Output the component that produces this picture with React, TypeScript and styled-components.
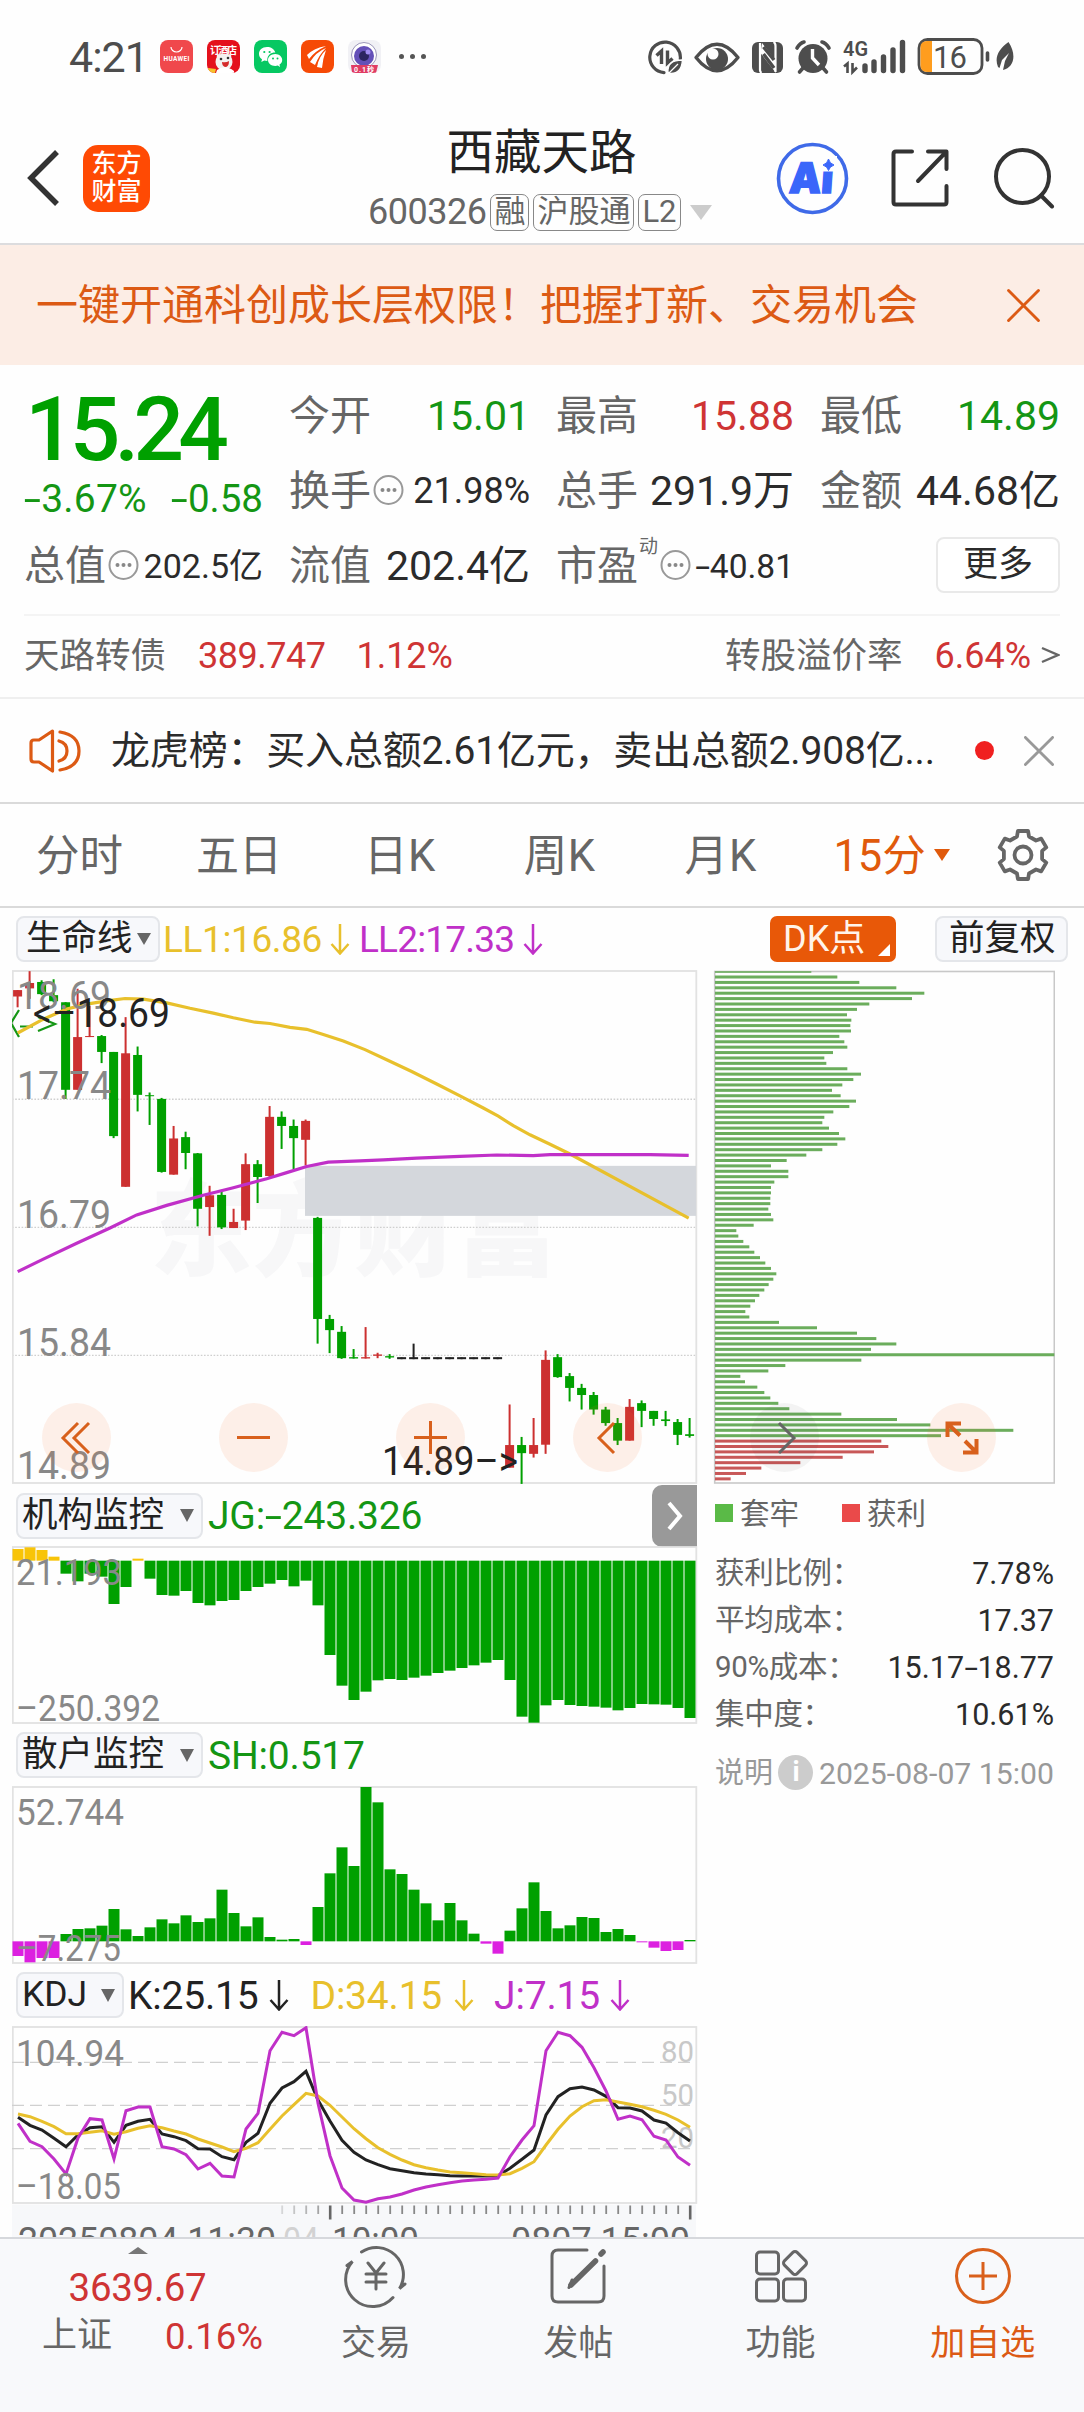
import React from "react";
import styled, { createGlobalStyle } from "styled-components";

const C = {
  ink: "#2b2b2b",
  gray: "#666",
  soft: "#888",
  orange: "#dc5a14",
  green: "#149614",
  bar: "#00a000",
  red: "#cf3434",
  yellow: "#e8c02c",
  purple: "#c030c8",
  blue: "#3f6ae8",
};

const FONT = 'Roboto, "Noto Sans CJK SC", sans-serif';

const Global = createGlobalStyle`
  html, body { margin: 0; padding: 0; background: #fefefe; }
  body { font-family: ${FONT}; width: 1084px; overflow-x: hidden; }
  * { box-sizing: border-box; }
  svg { display: block; flex: none; }
`;

const Screen = styled.div`
  width: 1084px;
  height: 2412px;
  display: flex;
  flex-direction: column;
  overflow: hidden;
  background: #fefefe;
`;

const T = styled.span<{ $s: number; $c?: string; $w?: number; $ls?: number; $ml?: number; $dy?: number }>`
  font-size: ${(p) => p.$s}px;
  color: ${(p) => p.$c || C.ink};
  font-weight: ${(p) => p.$w || 400};
  letter-spacing: ${(p) => p.$ls || 0}px;
  margin-left: ${(p) => p.$ml || 0}px;
  padding-top: ${(p) => p.$dy ?? 4}px;
  line-height: 1.1;
  white-space: nowrap;
  flex: none;
`;

const Dash = styled.span`
  display: inline-block;
  transform: scaleX(1.6);
  margin: 0 0.08em;
  &::before { content: "-"; }
`;

/* ---------- status bar ---------- */
const StatusBar = styled.header`
  height: 113px;
  padding: 0 70px 0 69px;
  display: flex;
  align-items: center;
`;
const AppIcons = styled.div`
  display: flex;
  gap: 14px;
  margin-left: 12px;
`;
const AppIcon = styled.div<{ $bg: string }>`
  width: 33px;
  height: 33px;
  border-radius: 8px;
  background: ${(p) => p.$bg};
  color: #fff;
  display: flex;
  align-items: center;
  justify-content: center;
  overflow: hidden;
  font-size: 8px;
  line-height: 1;
`;
const MoreDots = styled.div`
  display: flex;
  gap: 6px;
  margin-left: 18px;
  i { width: 5px; height: 5px; border-radius: 50%; background: #555; }
`;
const StatusRight = styled.div`
  margin-left: auto;
  display: flex;
  align-items: center;
`;

function StatusIcons() {
  const k = "#4d4d4d";
  return (
    <svg width="366" height="40" viewBox="648 36 366 40" fill="none" stroke={k}>
      <path d="M680.3 58 A15.3 15.3 0 1 0 664 71.600" strokeWidth="3.200" strokeLinecap="round" />
      <path d="M656.500 54.500 L661.500 50 V63 M667.500 49.500 V62 L672.500 57.500" strokeWidth="3.400" />
      <path d="M668 71.500 C667 63 672 59 682.500 59 C682 68 678 73 670 72.500 Z" fill={k} stroke="#fefefe" strokeWidth="1.500" />
      <path d="M667 74 L678 63" stroke="#fefefe" strokeWidth="1.300" />
      <path d="M696 56.500 Q717 30 738 56.500 Q717 83 696 56.500 Z" strokeWidth="3.400" strokeLinejoin="round" />
      <circle cx="717" cy="58" r="11" fill={k} stroke="none" />
      <circle cx="713" cy="53" r="5.500" fill="#fefefe" stroke="none" />
      <rect x="752" y="41" width="31" height="31" rx="6" fill={k} stroke="none" />
      <path d="M760 42 V69 Q760 71 761.500 72 M775.500 71 V45 Q775.500 42 773.500 41" stroke="#fefefe" strokeWidth="2.200" />
      <path d="M762 42 L776 60 V72 L760.500 52 Z" fill="#fefefe" stroke="none" />
      <path d="M763.500 46 L774 59 M763.500 53 L774 67" stroke={k} strokeWidth="3.400" />
      <circle cx="813" cy="57.500" r="14.500" fill={k} stroke="none" />
      <path d="M797 47 Q800 42 804 41 M829 47 Q826 42 822 41 M803 67 L799.500 71 M823 67 L826.500 71" strokeWidth="3.600" strokeLinecap="round" />
      <path d="M812.500 48 V57 L819 64" stroke="#fefefe" strokeWidth="3.400" />
      <text x="843" y="55" fontSize="21" fontWeight="600" fill={k} stroke="none" textLength="25" lengthAdjust="spacingAndGlyphs">4G</text>
      <path d="M844 65.500 L847.500 62.500 V72 M852.500 62 V71 L857 66.500" strokeWidth="2.600" />
      <path d="M865 65 V69.500 M874 61 V69.500 M883.500 56 V69.500 M893 49 V69.500 M902.500 41.500 V69.500" strokeWidth="5.400" strokeLinecap="round" />
      <rect x="919" y="38.500" width="63" height="34" rx="8.500" strokeWidth="2.800" fill="#fefefe" />
      <path d="M932 40 H927 Q920.500 40 920.500 46.500 V64.500 Q920.500 71 927 71 H932 Z" fill="#ff9d1e" stroke="none" />
      <text x="933" y="67" fontSize="31" fill={k} stroke="none" textLength="34">16</text>
      <path d="M987.500 52 V59" strokeWidth="3.600" strokeLinecap="round" />
      <path d="M998 66 C994 56 999 48 1008.500 41 C1017 54 1014 66 1003 69 L1005 60 L1009 52 L1002 59 L999.500 67 Z" fill={k} stroke="none" />
    </svg>
  );
}

/* ---------- title bar ---------- */
const TitleBar = styled.div`
  height: 132px;
  display: grid;
  grid-template-columns: 368px 343px 1fr;
  border-bottom: 2px solid #dcdcde;
`;
const TitleLeft = styled.div`
  display: flex;
  align-items: center;
  padding: 0 0 0 27px;
`;
const Logo = styled.div`
  width: 67px;
  height: 67px;
  margin-left: 24px;
  border-radius: 15px;
  background: #ff4a04;
  color: #fff;
  font-size: 25px;
  font-weight: 500;
  line-height: 28px;
  display: flex;
  align-items: center;
  justify-content: center;
  text-align: center;
`;
const TitleMid = styled.div`
  display: flex;
  flex-direction: column;
`;
const StockName = styled.div`
  height: 76px;
  line-height: 80px;
  font-size: 47.500px;
  text-align: center;
  color: #222;
  padding-left: 4px;
`;
const CodeRow = styled.div`
  display: flex;
  align-items: center;
  height: 46px;
`;
const Tag = styled.span`
  height: 37px;
  border: 1.500px solid #888;
  border-radius: 7px;
  font-size: 31px;
  line-height: 33px;
  padding: 0 3px;
  margin-left: 4px;
  color: ${C.gray};
  white-space: nowrap;
`;
const Caret = styled.i<{ $w: number; $h: number; $c: string; $ml?: number; $up?: boolean }>`
  width: 0;
  height: 0;
  flex: none;
  margin-left: ${(p) => p.$ml || 0}px;
  border-left: ${(p) => p.$w / 2}px solid transparent;
  border-right: ${(p) => p.$w / 2}px solid transparent;
  ${(p) => (p.$up ? "border-bottom" : "border-top")}: ${(p) => p.$h}px solid ${(p) => p.$c};
`;
const TitleRight = styled.div`
  display: flex;
  align-items: center;
  padding-left: 65px;
`;

/* ---------- banner ---------- */
const Banner = styled.div`
  height: 120px;
  background: #fcede5;
  display: flex;
  align-items: center;
  justify-content: space-between;
  padding: 0 44px 0 36px;
`;

/* ---------- quote ---------- */
const Quote = styled.section`
  height: 251px;
  display: grid;
  grid-template-columns: 239px 241px 238px 240px;
  column-gap: 26px;
  grid-template-rows: 100px 50px 100px;
  margin: 0 24px;
  border-bottom: 2px solid #f4f4f4;
`;
const PriceCell = styled.div`
  grid-row: 1 / 3;
  display: flex;
  flex-direction: column;
`;
const Price = styled.div`
  height: 119px;
  padding: 21px 0 0 1px;
  line-height: 88px;
  font-size: 89px;
  font-weight: 500;
  letter-spacing: -5.800px;
  color: ${C.bar};
`;
const Change = styled.div`
  display: flex;
  justify-content: space-between;
`;
const Cell = styled.div<{ $short?: boolean }>`
  display: flex;
  align-items: center;
  justify-content: space-between;
  width: 100%;
  height: ${(p) => (p.$short ? 50 : 100)}px;
`;
const LabelBox = styled.div`
  display: flex;
  align-items: center;
  gap: 2px;
`;
const Sup = styled.span`
  font-size: 19px;
  color: ${C.gray};
  align-self: flex-start;
  margin: -9px 0 0 -1px;
`;
const MoreBtn = styled.button`
  margin-left: auto;
  width: 124px;
  height: 56px;
  background: #fff;
  border: 2px solid #e9e9e9;
  border-radius: 8px;
  font: 400 35px/50px ${FONT};
  color: ${C.ink};
  padding: 0;
`;
const BondRow = styled.div`
  height: 83px;
  border-bottom: 2px solid #efefef;
  padding: 0 24px 3px 24px;
  display: flex;
  align-items: center;
`;
const Spacer = styled.div`
  flex: 1;
`;
const NewsRow = styled.div`
  height: 105px;
  border-bottom: 2px solid #dadada;
  display: flex;
  align-items: center;
  padding: 0 30px 0 29px;
`;
const RedDot = styled.i`
  width: 19px;
  height: 19px;
  border-radius: 50%;
  background: #f02020;
  margin: 0 30px 0 auto;
`;

/* ---------- tabs ---------- */
const Tabs = styled.nav`
  height: 104px;
  border-bottom: 2px solid #dadada;
  display: flex;
  align-items: center;
  padding: 0 35px 0 36px;
`;

/* ---------- charts ---------- */
const ChipBtn = styled.span<{ $w: number; $pl?: number }>`
  width: ${(p) => p.$w}px;
  height: 46px;
  border: 2px solid #e4e6ea;
  border-radius: 8px;
  background: #f7f8fb;
  color: #222;
  font-size: 35.500px;
  padding: 0 7px 0 ${(p) => p.$pl ?? 4}px;
  display: flex;
  align-items: center;
  justify-content: space-between;
  white-space: nowrap;
  line-height: 1;
  flex: none;
`;
const ToolRow = styled.div`
  height: 62px;
  display: flex;
  align-items: center;
  padding: 0 16px 0 16px;
`;
const DkBtn = styled.span`
  width: 126px;
  height: 46px;
  border-radius: 7px;
  background: #e85808;
  color: #fff4ea;
  font-size: 36px;
  line-height: 44px;
  display: flex;
  align-items: center;
  justify-content: space-between;
  padding: 0 6px 1px 13px;
  margin-left: auto;
  margin-right: 39px;
  svg { align-self: flex-end; margin-bottom: 5px; }
`;
const ChartArea = styled.section`
  display: flex;
  height: 1267px;
  overflow: hidden;
  position: relative;
`;
const LeftCol = styled.div`
  width: 702px;
  flex: none;
  padding-left: 12px;
  display: flex;
  flex-direction: column;
`;
const SubHead = styled.div<{ $h: number }>`
  height: ${(p) => p.$h}px;
  display: flex;
  align-items: center;
  padding-left: 4px;
  width: 685px;
`;
const NextBtn = styled.div`
  width: 45px;
  height: 62px;
  margin-left: auto;
  background: #999;
  border-radius: 10px 0 0 10px;
  display: flex;
  align-items: center;
  justify-content: center;
`;
const RightCol = styled.div`
  width: 342px;
  margin-left: 11px;
  display: flex;
  flex-direction: column;
`;
const Legend = styled.div`
  display: flex;
  align-items: center;
  height: 63px;
  padding-bottom: 8px;
`;
const Square = styled.i<{ $c: string; $ml?: number }>`
  width: 18px;
  height: 18px;
  background: ${(p) => p.$c};
  margin-left: ${(p) => p.$ml || 0}px;
  margin-right: 7px;
`;
const StatRow = styled.div`
  height: 47px;
  padding: 0 1px 0 2px;
  display: flex;
  align-items: center;
  justify-content: space-between;
`;
const NoteRow = styled(StatRow)`
  height: 46px;
  margin-top: 13px;
`;
const InfoDot = styled.i`
  width: 35px;
  height: 35px;
  border-radius: 50%;
  background: #ccc;
  color: #fff;
  font: 700 27px/35px ${FONT};
  text-align: center;
`;
const Overlay = styled.div`
  position: absolute;
  left: 42px;
  top: 433px;
  display: flex;
  gap: 108px;
`;
const Round = styled.div<{ $gray?: boolean }>`
  width: 69px;
  height: 69px;
  border-radius: 50%;
  background: ${(p) => (p.$gray ? "rgba(60,60,60,.06)" : "rgba(250,110,40,.1)")};
  display: flex;
  align-items: center;
  justify-content: center;
`;

/* ---------- bottom bar ---------- */
const BottomBar = styled.footer`
  flex: 1;
  border-top: 2px solid #d6d8dc;
  background: #f8f9fb;
  display: grid;
  grid-template-columns: 275px repeat(4, 202.250px);
`;
const IndexBox = styled.div`
  display: flex;
  flex-direction: column;
  align-items: center;
  padding-top: 8px;
`;
const IndexRow = styled.div`
  width: 221px;
  display: flex;
  align-self: flex-start;
  justify-content: space-between;
  margin: 4px 0 0 42px;
`;
const NavItem = styled.div<{ $c: string }>`
  display: flex;
  flex-direction: column;
  align-items: center;
  padding-top: 8px;
  color: ${(p) => p.$c};
  font-size: 35px;
  line-height: 44px;
  svg { margin-bottom: 17px; overflow: visible; }
`;

/* ---------- data ---------- */
// [kind, bodyTop, bodyBottom, high, low] in chart grid units
type Candle = [string, number, number, number, number];
const candles: Candle[] = [
  ["r", 89, 108, 89, 140], ["r", 68, 84, 33, 115], ["g", 65, 101, 60, 104], ["g", 104, 122, 57, 125],
  ["g", 125, 384, 125, 411], ["r", 228, 384, 85, 384], ["r", 225, 228, 135, 228], ["g", 225, 272, 222, 305],
  ["g", 272, 521, 272, 527], ["r", 276, 671, 169, 671], ["g", 281, 399, 256, 448], ["g", 400, 403, 392, 488],
  ["g", 411, 627, 408, 629], ["r", 528, 635, 491, 635], ["g", 524, 571, 508, 619], ["g", 572, 736, 571, 788],
  ["r", 696, 731, 668, 816], ["g", 695, 791, 686, 796], ["r", 775, 793, 736, 793], ["r", 604, 771, 572, 799],
  ["g", 604, 642, 592, 719], ["r", 464, 639, 432, 642], ["g", 464, 491, 448, 559], ["g", 491, 527, 472, 619],
  ["r", 476, 532, 472, 608], ["g", 763, 1062, 760, 1135], ["g", 1062, 1095, 1050, 1163], ["g", 1100, 1178, 1083, 1180],
  ["g", 1175, 1179, 1151, 1179], ["r", 1175, 1179, 1086, 1179], ["r", 1167, 1171, 1162, 1178], ["g", 1172, 1176, 1166, 1180],
  ["k", 1175, 1181, 1176, 1181], ["k", 1175, 1181, 1135, 1181], ["k", 1175, 1181, 1176, 1181], ["k", 1175, 1181, 1176, 1181],
  ["k", 1175, 1181, 1176, 1181], ["k", 1175, 1181, 1176, 1181], ["k", 1175, 1181, 1176, 1181], ["k", 1175, 1181, 1176, 1181],
  ["k", 1175, 1181, 1176, 1181], ["r", 1435, 1502, 1315, 1502], ["g", 1435, 1459, 1411, 1550], ["r", 1435, 1461, 1355, 1472],
  ["r", 1183, 1434, 1155, 1461], ["g", 1175, 1234, 1166, 1236], ["g", 1231, 1266, 1222, 1306], ["g", 1266, 1287, 1254, 1330],
  ["g", 1287, 1330, 1278, 1345], ["g", 1330, 1370, 1322, 1378], ["g", 1370, 1422, 1355, 1435], ["r", 1322, 1422, 1299, 1422],
  ["g", 1311, 1334, 1303, 1382], ["g", 1334, 1358, 1334, 1378], ["g", 1359, 1364, 1334, 1379], ["g", 1367, 1405, 1358, 1435],
  ["g", 1403, 1408, 1355, 1413],
];
const ll1 = [53, 216, 130, 175, 200, 145, 265, 130, 320, 121, 375, 114, 430, 116, 500, 127, 570, 143, 640, 157, 700, 171, 765, 184, 810, 188, 870, 199, 920, 205, 970, 220, 1030, 240, 1095, 265, 1160, 295, 1235, 330, 1310, 367, 1380, 402, 1450, 438, 1495, 462, 1540, 490, 1590, 517, 1650, 545, 1710, 574, 2066, 764];
const ll2 = [53, 922, 130, 885, 230, 838, 330, 793, 410, 754, 500, 726, 610, 696, 700, 674, 800, 647, 860, 629, 920, 611, 985, 598, 1080, 594, 1150, 591, 1250, 586, 1380, 581, 1490, 577, 1600, 579, 1650, 576, 1950, 576, 2066, 578];
const chips = [333, 411, 477, 588, 672, 635, 507, 470, 440, 453, 450, 452, 417, 432, 441, 398, 372, 378, 441, 482, 459, 426, 395, 421, 467, 447, 399, 372, 366, 386, 416, 435, 411, 366, 318, 259, 212, 264, 264, 222, 212, 212, 210, 210, 204, 212, 219, 160, 108, 114, 129, 147, 162, 179, 195, 212, 228, 219, 205, 192, 177, 164, 150, 135, 147, 236, 350, 470, 528, 588, 512, 1062, 483, 255, 204, 120, 134, 171, 192, 210, 234, 267, 423, 590, 690, 939, 722, 543, 564, 521, 427, 300, 183, 137, 91];
const jg = [207, 202, 210, 230, 281, 304, 281, 290, 372, 321, 236, 296, 345, 347, 333, 369, 376, 363, 360, 333, 321, 311, 300, 319, 302, 376, 525, 617, 660, 635, 601, 597, 600, 593, 587, 579, 572, 564, 556, 548, 540, 600, 710, 728, 676, 660, 675, 678, 680, 683, 691, 684, 672, 673, 674, 684, 714];
const sh = [678, 697, 684, 684, 612, 597, 595, 587, 537, 598, 618, 592, 568, 580, 556, 576, 565, 479, 549, 589, 562, 621, 629, 627, 645, 531, 430, 352, 408, 171, 217, 418, 432, 479, 520, 571, 519, 571, 611, 641, 671, 602, 535, 457, 543, 595, 586, 561, 564, 606, 597, 615, 637, 653, 663, 660, 630];
const kLine = [412, 436, 450, 475, 500, 465, 443, 440, 487, 436, 424, 418, 462, 470, 482, 506, 507, 530, 539, 487, 460, 370, 324, 305, 274, 360, 423, 481, 517, 540, 554, 566, 572, 578, 582, 584, 587, 588, 588, 588, 587, 565, 538, 510, 405, 350, 326, 321, 330, 349, 383, 384, 393, 420, 429, 458, 483];
const dLine = [402, 410, 424, 440, 461, 461, 457, 452, 463, 455, 445, 437, 443, 453, 462, 477, 489, 501, 515, 505, 488, 448, 408, 374, 340, 348, 376, 411, 446, 476, 503, 523, 540, 554, 563, 570, 576, 578, 581, 584, 585, 581, 565, 545, 495, 448, 408, 380, 362, 359, 366, 373, 380, 391, 403, 420, 442];
const jLine = [430, 484, 500, 537, 582, 474, 416, 420, 537, 392, 381, 381, 500, 507, 524, 567, 550, 588, 591, 447, 400, 212, 157, 167, 143, 370, 527, 624, 660, 667, 656, 651, 642, 630, 621, 614, 608, 603, 600, 598, 594, 530, 480, 437, 212, 157, 167, 202, 263, 333, 418, 408, 419, 469, 480, 531, 556];

const GRID = 2.9585;
const py = (v: number) => 960 + v / GRID;
const toPath = (v: number[]) => {
  let d = "";
  for (let i = 0; i < v.length; i += 2) d += `${i ? "L" : "M"}${(v[i] / 3).toFixed(1)} ${py(v[i + 1]).toFixed(1)}`;
  return d;
};
const series = (v: number[]) => v.map((y, i) => `${i ? "L" : "M"}${18 + i * 12} ${(y / 3 + 1980).toFixed(1)}`).join("");

function Axis({ x = 18, y, w, children, s = 38, c = C.soft }: { x?: number; y: number; w: number; children: string; s?: number; c?: string }) {
  return (
    <text x={x} y={y} fontSize={s} fill={c} textLength={w} lengthAdjust="spacingAndGlyphs">
      {children}
    </text>
  );
}

function MainChart() {
  const col: Record<string, string> = { r: "#cc3030", g: C.bar, k: "#222" };
  return (
    <svg width="686" height="515" viewBox="12 970 686 515">
      <text x="150" y="1268" fontSize="104" fontWeight="900" fill="#f7f7f8" textLength="408" lengthAdjust="spacingAndGlyphs">东方财富</text>
      {[412, 791, 1170].map((v) => (
        <path key={v} d={`M12 ${py(v)}H696`} stroke="#cfcfcf" strokeWidth="1.300" strokeDasharray="1.600 1.600" />
      ))}
      <rect x="12.800" y="971" width="683.500" height="512" fill="none" stroke="#e2e2e2" strokeWidth="1.800" />
      <rect x="305" y={py(609)} width="391" height={148 / GRID} fill="#d4d7dc" />
      {candles.map(([k, t, b, h, l], i) => {
        const x = 17.6 + i * 12;
        return (
          <g key={i} fill={col[k]}>
            <rect x={x - 1} y={py(h)} width="2" height={(l - h) / GRID} />
            <rect x={x - 4.5} y={py(t)} width="9" height={(b - t) / GRID} />
          </g>
        );
      })}
      <path d="M19 1010 L11 1023 L19 1037 M20 1026.500 H33 M38 1017 L55 1024 L38 1031" fill="none" stroke="#149614" strokeWidth="2.200" />
      <path d={toPath(ll1)} fill="none" stroke={C.yellow} strokeWidth="3.200" />
      <path d={toPath(ll2)} fill="none" stroke={C.purple} strokeWidth="3.200" />
      <Axis x={17} y={1008.500} w={94}>18.69</Axis>
      <Axis x={17} y={1098.500} w={94}>17.74</Axis>
      <Axis x={17} y={1228} w={94}>16.79</Axis>
      <Axis x={17} y={1355.500} w={94}>15.84</Axis>
      <Axis x={17} y={1479} w={94}>14.89</Axis>
      <Axis x={33} y={1026.500} w={137} c="#222" s={40}>{"<–18.69"}</Axis>
      <Axis x={382} y={1474.500} w={136} c="#222" s={40}>{"14.89–>"}</Axis>
    </svg>
  );
}

function ChipChart() {
  return (
    <svg width="342" height="515" viewBox="713 970 342 515">
      <rect x="714.700" y="971.500" width="339.600" height="511.500" fill="none" stroke="#c8c8c8" strokeWidth="1.600" />
      {chips.map((w, i) => (
        <rect key={i} x="715" y={py(32 + i * 15.965) - (i ? 0.7 : -0.4)} width={(w - 44) / 3} height={i ? 3 : 1.6} fill={i > 86 ? "#c85858" : "#6bad5c"} />
      ))}
    </svg>
  );
}

function BarChart({ data, base, zero, top, kind }: { data: number[]; base: number; zero: number; top: number; kind: "jg" | "sh" }) {
  const s = 3;
  const z = base + zero / s;
  return (
    <svg width="686" height="178" viewBox={`12 ${top} 686 178`}>
      <rect x="12.800" y={top + 1} width="683.500" height="176" fill="none" stroke="#e2e2e2" strokeWidth="1.800" />
      {data.map((v, i) => {
        const y = base + v / s;
        const up = y < z;
        const c = kind === "jg" ? (up ? "#f8c408" : C.bar) : up ? C.bar : "#dc20e0";
        return <rect key={i} x={12.5 + i * 12} y={Math.min(y, z)} width="11" height={Math.abs(y - z)} fill={c} />;
      })}
      {kind === "jg" ? (
        <>
          <Axis x={16} y={1584.500} w={106} s={37}>21.193</Axis>
          <Axis x={16} y={1720.500} w={144} s={37}>–250.392</Axis>
        </>
      ) : (
        <>
          <Axis x={16} y={1824.500} w={108} s={37}>52.744</Axis>
          <Axis x={16} y={1960.500} w={105} s={37}>–7.275</Axis>
        </>
      )}
    </svg>
  );
}

function KdjChart() {
  return (
    <svg width="686" height="211" viewBox="12 2026 686 211">
      <rect x="12.800" y="2027" width="683.500" height="176" fill="none" stroke="#e2e2e2" strokeWidth="1.800" />
      {[247, 376, 506].map((y) => (
        <path key={y} d={`M12 ${y / 3 + 1980}H696`} stroke="#d0d0d0" strokeWidth="1.300" strokeDasharray="12 6" />
      ))}
      <Axis x={661} y={2062} w={33} s={30} c="#c8c8c8">80</Axis>
      <Axis x={661} y={2105} w={33} s={30} c="#c8c8c8">50</Axis>
      <Axis x={661} y={2148} w={33} s={30} c="#c8c8c8">20</Axis>
      <g fill="none" strokeWidth="3">
        <path d={series(kLine)} stroke="#222" />
        <path d={series(dLine)} stroke={C.yellow} />
        <path d={series(jLine)} stroke={C.purple} />
      </g>
      <Axis x={16} y={2066} w={108} s={37}>104.94</Axis>
      <Axis x={16} y={2199} w={105} s={37}>–18.05</Axis>
      <rect x="12" y="2204.500" width="684" height="33" fill="#f7f8fa" />
      {Array.from({ length: 35 }, (_, j) => j).map((j) => {
        const major = j === 4 || j === 34;
        return (
          <rect key={j} x={281.3 + j * 12 - (major ? 0.4 : 0)} y="2205.500" width={major ? 2.6 : 1.8} height={major ? 14 : 8.5} fill={major ? "#666" : "#888"} opacity={j < 4 ? 0.3 + j * 0.15 : 1} />
        );
      })}
      <Axis x={283} y={2253} w={36} s={37} c="#d2d2d2">04</Axis>
      <Axis x={18} y={2253} w={258} s={37} c="#666">20250804 11:30</Axis>
      <Axis x={332} y={2253} w={87} s={37} c="#666">10:00</Axis>
      <Axis x={511} y={2253} w={179} s={37} c="#666">0807 15:00</Axis>
    </svg>
  );
}

/* ---------- small icons ---------- */
const ArrowSvg = styled.svg<{ $ml: number }>`
  margin-left: ${(p) => p.$ml}px;
`;
const Down = ({ c, ml = 8 }: { c: string; ml?: number }) => (
  <ArrowSvg $ml={ml} width="20" height="31" viewBox="0 0 20 31" fill="none" stroke={c} strokeWidth="2.500">
    <path d="M10 0V29M1.500 20L10 29.500L18.500 20" />
  </ArrowSvg>
);
const Ellip = () => (
  <svg width="31" height="31" viewBox="0 0 31 31">
    <circle cx="15.500" cy="15" r="14" fill="none" stroke="#999" strokeWidth="2" />
    <g fill="#888"><circle cx="9.500" cy="15" r="2" /><circle cx="15.500" cy="15" r="2" /><circle cx="21.500" cy="15" r="2" /></g>
  </svg>
);
const Cross = ({ s, c, w }: { s: number; c: string; w: number }) => (
  <svg width={s} height={s} viewBox="0 0 32 32" stroke={c} strokeWidth={w} strokeLinecap="round">
    <path d="M1.500 1.500L30.500 30.500M30.500 1.500L1.500 30.500" />
  </svg>
);
const gearPath = () => {
  // six-lobed cog with chamfered valleys
  const pts: string[] = [];
  const d = Math.PI / 180;
  for (let i = 0; i < 6; i++) {
    const a = (i * 60 - 90) * d;
    [[-12, 24.5], [12, 24.5], [18, 19.5], [42, 19.5]].forEach(([o, r]) => {
      pts.push(`${(26 + r * Math.cos(a + o * d)).toFixed(1)} ${(26 + r * Math.sin(a + o * d)).toFixed(1)}`);
    });
  }
  return "M" + pts.join("L") + "Z";
};

export default function App() {
  return (
    <Screen>
      <Global />
      <StatusBar>
        <T $s={43} $c="#4d4d4d" $ls={-1} $dy={2}>4:21</T>
        <AppIcons>
          <AppIcon $bg="#f0484c">
            <svg width="33" height="33" viewBox="0 0 33 33">
              <path d="M11 7a5.500 5 0 0 0 11 0" fill="none" stroke="#fff" strokeWidth="1.200" />
              <text x="3.500" y="21" fontSize="6.500" fontWeight="700" fill="#fff" textLength="26">HUAWEI</text>
            </svg>
          </AppIcon>
          <AppIcon $bg="#e4101c">
            <svg width="33" height="33" viewBox="0 0 33 33">
              <text x="3" y="13.500" fontSize="10" fontWeight="700" fill="#fff" textLength="27">订酒店</text>
              <circle cx="17" cy="22" r="8.500" fill="#f4f1f0" />
              <path d="M9.500 20L10 13.500L15 16ZM24.500 20L24 13.500L19 16Z" fill="#f4f1f0" />
              <path d="M10 30Q18 24 27 31L27 33H9Z" fill="#fff" />
              <circle cx="14" cy="19" r="1.300" fill="#333" /><circle cx="21" cy="18" r="1.300" fill="#333" />
              <path d="M15 22Q19 23 22 21Q22 27 18 27Q15 26 15 22Z" fill="#d52a2a" />
              <path d="M1 28L9 29L8 33H1Z" fill="#f6c22c" />
            </svg>
          </AppIcon>
          <AppIcon $bg="#06c862">
            <svg width="25" height="22" viewBox="0 0 25 22">
              <path d="M9 1C4 1 1 4.200 1 8c0 2.200 1.100 4 3 5.300L3.300 16 6.300 14.500c1 .3 2 .4 3 .4C9 9 13 6.500 17.300 6.600 16.300 3 13 1 9 1Z" fill="#fff" />
              <path d="M17.300 8C13 8 10 10.800 10 14s3 6 7.300 6c.9 0 1.700-.1 2.500-.4L22 21l-.5-2.400C23 17.500 24.200 16 24.200 14c0-3.200-3-6-6.900-6Z" fill="#fff" />
              <g fill="#06c862"><circle cx="6.300" cy="6" r="1.100" /><circle cx="11.600" cy="6" r="1.100" /><circle cx="15" cy="12.500" r="1" /><circle cx="19.500" cy="12.500" r="1" /></g>
            </svg>
          </AppIcon>
          <AppIcon $bg="#f64a06">
            <svg width="24" height="24" viewBox="0 0 24 24" fill="#fff">
              <path d="M2 10Q9 3 21 1Q10 6 4 14ZM5 17Q11 7 21 3Q14 10 10 20ZM12 22Q14 11 21 5Q18 13 17 23Z" />
            </svg>
          </AppIcon>
          <AppIcon $bg="#f1f1f5">
            <svg width="33" height="33" viewBox="0 0 33 33">
              <circle cx="16" cy="15" r="12.500" fill="#fff" stroke="#9a96b8" strokeWidth="1" />
              <circle cx="16" cy="16" r="10" fill="#6450b8" />
              <circle cx="16" cy="16" r="5" fill="#2b2560" /><circle cx="20" cy="12" r="2.500" fill="#a08cf0" />
              <path d="M3 25H30L28 33H4Z" fill="#e03c64" />
              <text x="6" y="32" fontSize="7" fontWeight="700" fill="#fff" textLength="20">0.1秒</text>
            </svg>
          </AppIcon>
        </AppIcons>
        <MoreDots><i /><i /><i /></MoreDots>
        <StatusRight><StatusIcons /></StatusRight>
      </StatusBar>

      <TitleBar>
        <TitleLeft>
          <svg width="32" height="56" viewBox="0 0 32 56" fill="none" stroke="#333" strokeWidth="5.500">
            <path d="M30 2L4 28L30 54" />
          </svg>
          <Logo>东方<br />财富</Logo>
        </TitleLeft>
        <TitleMid>
          <StockName>西藏天路</StockName>
          <CodeRow>
            <T $s={36} $c={C.gray} $ls={-0.5} $dy={2}>600326</T>
            <Tag>融</Tag><Tag>沪股通</Tag><Tag>L2</Tag>
            <Caret $w={22} $h={15} $c="#ccc" $ml={9} />
          </CodeRow>
        </TitleMid>
        <TitleRight>
          <svg width="73" height="73" viewBox="0 0 73 73">
            <circle cx="36.500" cy="36.500" r="34" fill="none" stroke={C.blue} strokeWidth="3.600" />
            <text x="13" y="51" fontSize="42" fontWeight="900" fontFamily="Inter, sans-serif" fill="#3a66fa" stroke="#3a66fa" strokeWidth="1.500" textLength="44" lengthAdjust="spacingAndGlyphs" transform="skewX(-4) translate(3 0)">Ai</text>
            <rect x="45" y="14" width="16" height="15.500" fill="#fefefe" />
            <path d="M52.500 17Q53.500 21.500 58 23Q53.500 24.500 52.500 28.500Q51.500 24.500 47 23Q51.500 21.500 52.500 17Z" fill="#3a66fa" stroke="#3a66fa" />
          </svg>
          <svg width="100" height="58" viewBox="-42 0 100 58" fill="none" stroke="#333" strokeWidth="4" strokeLinecap="round" strokeLinejoin="round">
            <path d="M21 2.500H5Q2.500 2.500 2.500 5V53Q2.500 55.500 5 55.500H53Q55.500 55.500 55.500 53V37M37 2.500H55.500V20M55 3L27 32" />
          </svg>
          <svg width="106" height="61" viewBox="-45 0 106 61" fill="none" stroke="#333" strokeWidth="4">
            <circle cx="28.500" cy="28.500" r="26.500" /><path d="M47 47.500L58 58.500" strokeLinecap="round" />
          </svg>
        </TitleRight>
      </TitleBar>

      <Banner>
        <T $s={42} $c={C.orange} $dy={2}>一键开通科创成长层权限！把握打新、交易机会</T>
        <Cross s={33} c={C.orange} w={2.8} />
      </Banner>

      <Quote>
        <PriceCell>
          <Price>15.24</Price>
          <Change>
            <T $s={39} $c={C.green} $ls={0.2}><Dash />3.67%</T>
            <T $s={38.5} $c={C.green}><Dash />0.58</T>
          </Change>
        </PriceCell>
        <Cell><T $s={41} $c={C.gray}>今开</T><T $s={41} $c={C.green}>15.01</T></Cell>
        <Cell><T $s={41} $c={C.gray}>最高</T><T $s={41} $c={C.red}>15.88</T></Cell>
        <Cell><T $s={41} $c={C.gray}>最低</T><T $s={41} $c={C.green}>14.89</T></Cell>
        <Cell $short><LabelBox><T $s={41} $c={C.gray}>换手</T><Ellip /></LabelBox><T $s={36}>21.98%</T></Cell>
        <Cell $short><T $s={41} $c={C.gray}>总手</T><T $s={41}>291.9万</T></Cell>
        <Cell $short><T $s={41} $c={C.gray}>金额</T><T $s={41}>44.68亿</T></Cell>
        <Cell><LabelBox><T $s={41} $c={C.gray}>总值</T><Ellip /></LabelBox><T $s={34}>202.5亿</T></Cell>
        <Cell><T $s={41} $c={C.gray}>流值</T><T $s={41}>202.4亿</T></Cell>
        <Cell>
          <LabelBox><T $s={41} $c={C.gray}>市盈</T><Sup>动</Sup><Ellip /></LabelBox>
          <T $s={33.5}><Dash />40.81</T>
        </Cell>
        <Cell><MoreBtn>更多</MoreBtn></Cell>
      </Quote>

      <BondRow>
        <T $s={35.5} $c={C.gray}>天路转债</T>
        <T $s={36} $c={C.red} $ml={32} $ls={-0.5}>389.747</T>
        <T $s={36} $c={C.red} $ml={31}>1.12%</T>
        <Spacer />
        <T $s={35.5} $c={C.gray}>转股溢价率</T>
        <T $s={36} $c={C.red} $ml={32}>6.64%</T>
        <svg width="29" height="18" viewBox="-10 0 29 18" fill="none" stroke="#666" strokeWidth="2.400">
          <path d="M1 2L17 9L1 16" />
        </svg>
      </BondRow>

      <NewsRow>
        <svg width="53" height="44" viewBox="0 0 53 44" fill="none" stroke={C.orange} strokeWidth="3.200" strokeLinejoin="round" strokeLinecap="round">
          <path d="M23.500 2L10 11H5Q2 11 2 14V30Q2 33 5 33H10L23.500 42ZM30 12Q38 14 38 22Q38 30 30 32M31 3Q50 6 50 22Q50 38 31 41" />
        </svg>
        <T $s={39} $ml={29} $ls={-0.18} $dy={1}>龙虎榜：买入总额2.61亿元，卖出总额2.908亿...</T>
        <RedDot />
        <Cross s={30} c="#999" w={3} />
      </NewsRow>

      <Tabs>
        <T $s={43.5} $c={C.gray}>分时</T>
        <T $s={43} $c={C.gray} $ml={73}>五日</T>
        <T $s={43.5} $c={C.gray} $ml={82} $ls={0.5}>日K</T>
        <T $s={43.5} $c={C.gray} $ml={88} $ls={0.5}>周K</T>
        <T $s={43.5} $c={C.gray} $ml={89} $ls={1}>月K</T>
        <T $s={43.5} $c="#e05a0c" $ml={76}>15分</T>
        <Caret $w={16} $h={12} $c="#e05a0c" $ml={8} />
        <Spacer />
        <svg width="52" height="52" viewBox="0 0 52 52" fill="none" stroke="#666" strokeWidth="3.800" strokeLinejoin="round">
          <path d={gearPath()} /><circle cx="26" cy="26" r="8.500" />
        </svg>
      </Tabs>

      <ToolRow>
        <ChipBtn $w={144} $pl={8}>生命线<Caret $w={15} $h={12} $c="#666" /></ChipBtn>
        <T $s={37} $c={C.yellow} $ml={3} $ls={-0.4} $dy={2}>LL1:16.86</T><Down c={C.yellow} />
        <T $s={37} $c={C.purple} $ml={9} $ls={-0.8} $dy={2}>LL2:17.33</T><Down c={C.purple} ml={9} />
        <DkBtn>DK点<svg width="12" height="12" viewBox="0 0 12 12"><path d="M12 0V12H0Z" fill="#fff" /></svg></DkBtn>
        <ChipBtn $w={133} $pl={12}>前复权</ChipBtn>
      </ToolRow>

      <ChartArea>
        <LeftCol>
          <MainChart />
          <SubHead $h={61}>
            <ChipBtn $w={187}>机构监控<Caret $w={15} $h={13} $c="#666" /></ChipBtn>
            <T $s={39} $c={C.green} $ml={5} $ls={-0.2} $dy={1}>JG:<Dash />243.326</T>
            <NextBtn>
              <svg width="20" height="30" viewBox="0 0 20 30" fill="none" stroke="#fff" strokeWidth="4"><path d="M4 2L15 15L4 28" /></svg>
            </NextBtn>
          </SubHead>
          <BarChart data={jg} base={1480} zero={242} top={1546} kind="jg" />
          <SubHead $h={62}>
            <ChipBtn $w={187}>散户监控<Caret $w={15} $h={13} $c="#666" /></ChipBtn>
            <T $s={39} $c={C.green} $ml={5} $ls={-0.2} $dy={2}>SH:0.517</T>
          </SubHead>
          <BarChart data={sh} base={1730} zero={634} top={1786} kind="sh" />
          <SubHead $h={62}>
            <ChipBtn $w={108}>KDJ<Caret $w={15} $h={13} $c="#666" /></ChipBtn>
            <T $s={39} $c="#222" $ml={4} $ls={-0.2} $dy={2}>K:25.15</T><Down c="#222" ml={11} />
            <T $s={39} $c={C.yellow} $ml={21} $ls={-0.2} $dy={2}>D:34.15</T><Down c={C.yellow} ml={12} />
            <T $s={39} $c={C.purple} $ml={20} $ls={-0.2} $dy={2}>J:7.15</T><Down c={C.purple} ml={10} />
          </SubHead>
          <KdjChart />
        </LeftCol>
        <RightCol>
          <ChipChart />
          <Legend>
            <Square $c="#5aba47" $ml={2} /><T $s={29.5} $c={C.gray}>套牢</T>
            <Square $c="#ea4a4a" $ml={43} /><T $s={29.5} $c={C.gray}>获利</T>
          </Legend>
          <StatRow><T $s={29.5} $c={C.gray} $ls={-0.3}>获利比例：</T><T $s={30.5}>7.78%</T></StatRow>
          <StatRow><T $s={29.5} $c={C.gray} $ls={-0.3}>平均成本：</T><T $s={30.5}>17.37</T></StatRow>
          <StatRow><T $s={29.5} $c={C.gray} $ls={-0.3}>90%成本：</T><T $s={30.5}>15.17<Dash />18.77</T></StatRow>
          <StatRow><T $s={29.5} $c={C.gray} $ls={-0.3}>集中度：</T><T $s={30.5}>10.61%</T></StatRow>
          <NoteRow>
            <T $s={29} $c="#999">说明</T><InfoDot>i</InfoDot><T $s={30.2} $c="#999">2025-08-07 15:00</T>
          </NoteRow>
        </RightCol>
        <Overlay>
          <Round><svg width="34" height="34" viewBox="0 0 34 34" fill="none" stroke="#d8601c" strokeWidth="3"><path d="M18 2L3 17L18 32M29 2L14 17L29 32" /></svg></Round>
          <Round><svg width="33" height="4" viewBox="0 0 33 4"><rect width="33" height="3" fill="#d8601c" /></svg></Round>
          <Round><svg width="33" height="33" viewBox="0 0 33 33" stroke="#d8601c" strokeWidth="3"><path d="M16.500 0V33M0 16.500H33" /></svg></Round>
          <Round><svg width="34" height="34" viewBox="0 0 34 34" fill="none" stroke="#d8601c" strokeWidth="3"><path d="M23 2L8 17L23 32" /></svg></Round>
          <Round $gray><svg width="34" height="34" viewBox="0 0 34 34" fill="none" stroke="#666" strokeWidth="3"><path d="M11 2L26 17L11 32" /></svg></Round>
          <Round><svg width="34" height="34" viewBox="0 0 34 34" fill="none" stroke="#d8601c" strokeWidth="4"><path d="M2.500 16V2.500H16M3 3L15 14.500M31.500 18V31.500H18M31 31L20 20" /></svg></Round>
        </Overlay>
      </ChartArea>

      <BottomBar>
        <IndexBox>
          <Caret $w={21} $h={7} $c="#777" $up />
          <T $s={38.5} $c={C.red} $ls={-0.3} $dy={13}>3639.67</T>
          <IndexRow><T $s={35} $c={C.gray}>上证</T><T $s={36.5} $c={C.red}>0.16%</T></IndexRow>
        </IndexBox>
        <NavItem $c={C.gray}>
          <svg width="66" height="58" viewBox="0 1 66 58" fill="none" stroke="#666" strokeWidth="3" strokeLinecap="round">
            <path d="M18.500 6A27 27 0 0 1 56.500 42.500L62 38M50 51.500A27 27 0 0 1 9.500 15.500L4 19.500M25 17L33 27L41 17M33 27V43M23 28H43M23 36H43" />
          </svg>
          交易
        </NavItem>
        <NavItem $c={C.gray}>
          <svg width="58" height="58" viewBox="0 0 58 58" fill="none" stroke="#666" strokeWidth="3" strokeLinecap="round">
            <path d="M38 3H9Q3 3 3 9V49Q3 55 9 55H49Q55 55 55 49V19" />
            <path d="M46.500 14L22 38" strokeWidth="5.500" /><path d="M20 40.500L23 33" strokeWidth="3" /><path d="M52 7L54 5" strokeWidth="5.500" />
          </svg>
          发帖
        </NavItem>
        <NavItem $c={C.gray}>
          <svg width="54" height="58" viewBox="0 0 54 58" fill="none" stroke="#666" strokeWidth="3">
            <rect x="2.500" y="5" width="22" height="22" rx="3.500" /><rect x="2.500" y="32" width="22" height="22" rx="3.500" />
            <rect x="29.500" y="32" width="22" height="22" rx="3.500" />
            <rect x="32" y="7" width="18" height="18" rx="3" transform="rotate(45 41 16)" />
          </svg>
          功能
        </NavItem>
        <NavItem $c="#dc5a14">
          <svg width="58" height="58" viewBox="0 0 58 58" fill="none" stroke="#d9601c" strokeWidth="3">
            <circle cx="29" cy="29" r="26.500" /><path d="M29 15V43M15 29H43" />
          </svg>
          加自选
        </NavItem>
      </BottomBar>
    </Screen>
  );
}
